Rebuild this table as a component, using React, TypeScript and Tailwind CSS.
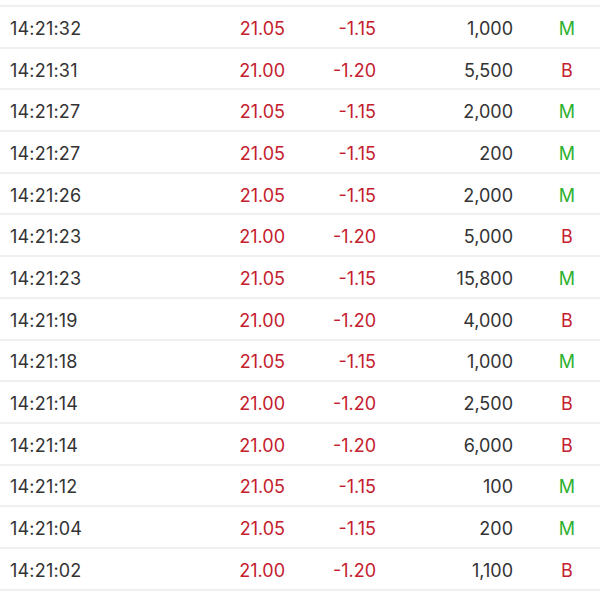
import React from "react";

const rows: [string, string, string, string, "M" | "B"][] = [
  ["14:21:32", "21.05", "-1.15", "1,000", "M"],
  ["14:21:31", "21.00", "-1.20", "5,500", "B"],
  ["14:21:27", "21.05", "-1.15", "2,000", "M"],
  ["14:21:27", "21.05", "-1.15", "200", "M"],
  ["14:21:26", "21.05", "-1.15", "2,000", "M"],
  ["14:21:23", "21.00", "-1.20", "5,000", "B"],
  ["14:21:23", "21.05", "-1.15", "15,800", "M"],
  ["14:21:19", "21.00", "-1.20", "4,000", "B"],
  ["14:21:18", "21.05", "-1.15", "1,000", "M"],
  ["14:21:14", "21.00", "-1.20", "2,500", "B"],
  ["14:21:14", "21.00", "-1.20", "6,000", "B"],
  ["14:21:12", "21.05", "-1.15", "100", "M"],
  ["14:21:04", "21.05", "-1.15", "200", "M"],
  ["14:21:02", "21.00", "-1.20", "1,100", "B"],
];

export default function App() {
  return (
    <div
      className="w-[600px] h-[600px] bg-white overflow-hidden pt-[5px]"
      style={{ fontFamily: "Inter, 'Liberation Sans', sans-serif" }}
    >
      {rows.map((r, i) => (
        <div
          key={i}
          className="h-[41.7px] border-t-2 border-[#f0f0f0] flex items-center pt-[4px] text-[18px] leading-none"
        >
          <div className="w-[120px] shrink-0 pl-[10px] text-[#333333] tracking-[0.2px]">{r[0]}</div>
          <div className="w-[165px] shrink-0 text-right text-[#c4202e]">{r[1]}</div>
          <div className="w-[91px] shrink-0 text-right text-[#c4202e]">{r[2]}</div>
          <div className="w-[137px] shrink-0 text-right text-[#333333]">{r[3]}</div>
          <div
            className={
              "w-[108px] shrink-0 text-center " +
              (r[4] === "M" ? "text-[#2eb030]" : "text-[#c4202e]")
            }
          >
            {r[4]}
          </div>
        </div>
      ))}
      <div className="border-t-2 border-[#f0f0f0]" />
    </div>
  );
}
